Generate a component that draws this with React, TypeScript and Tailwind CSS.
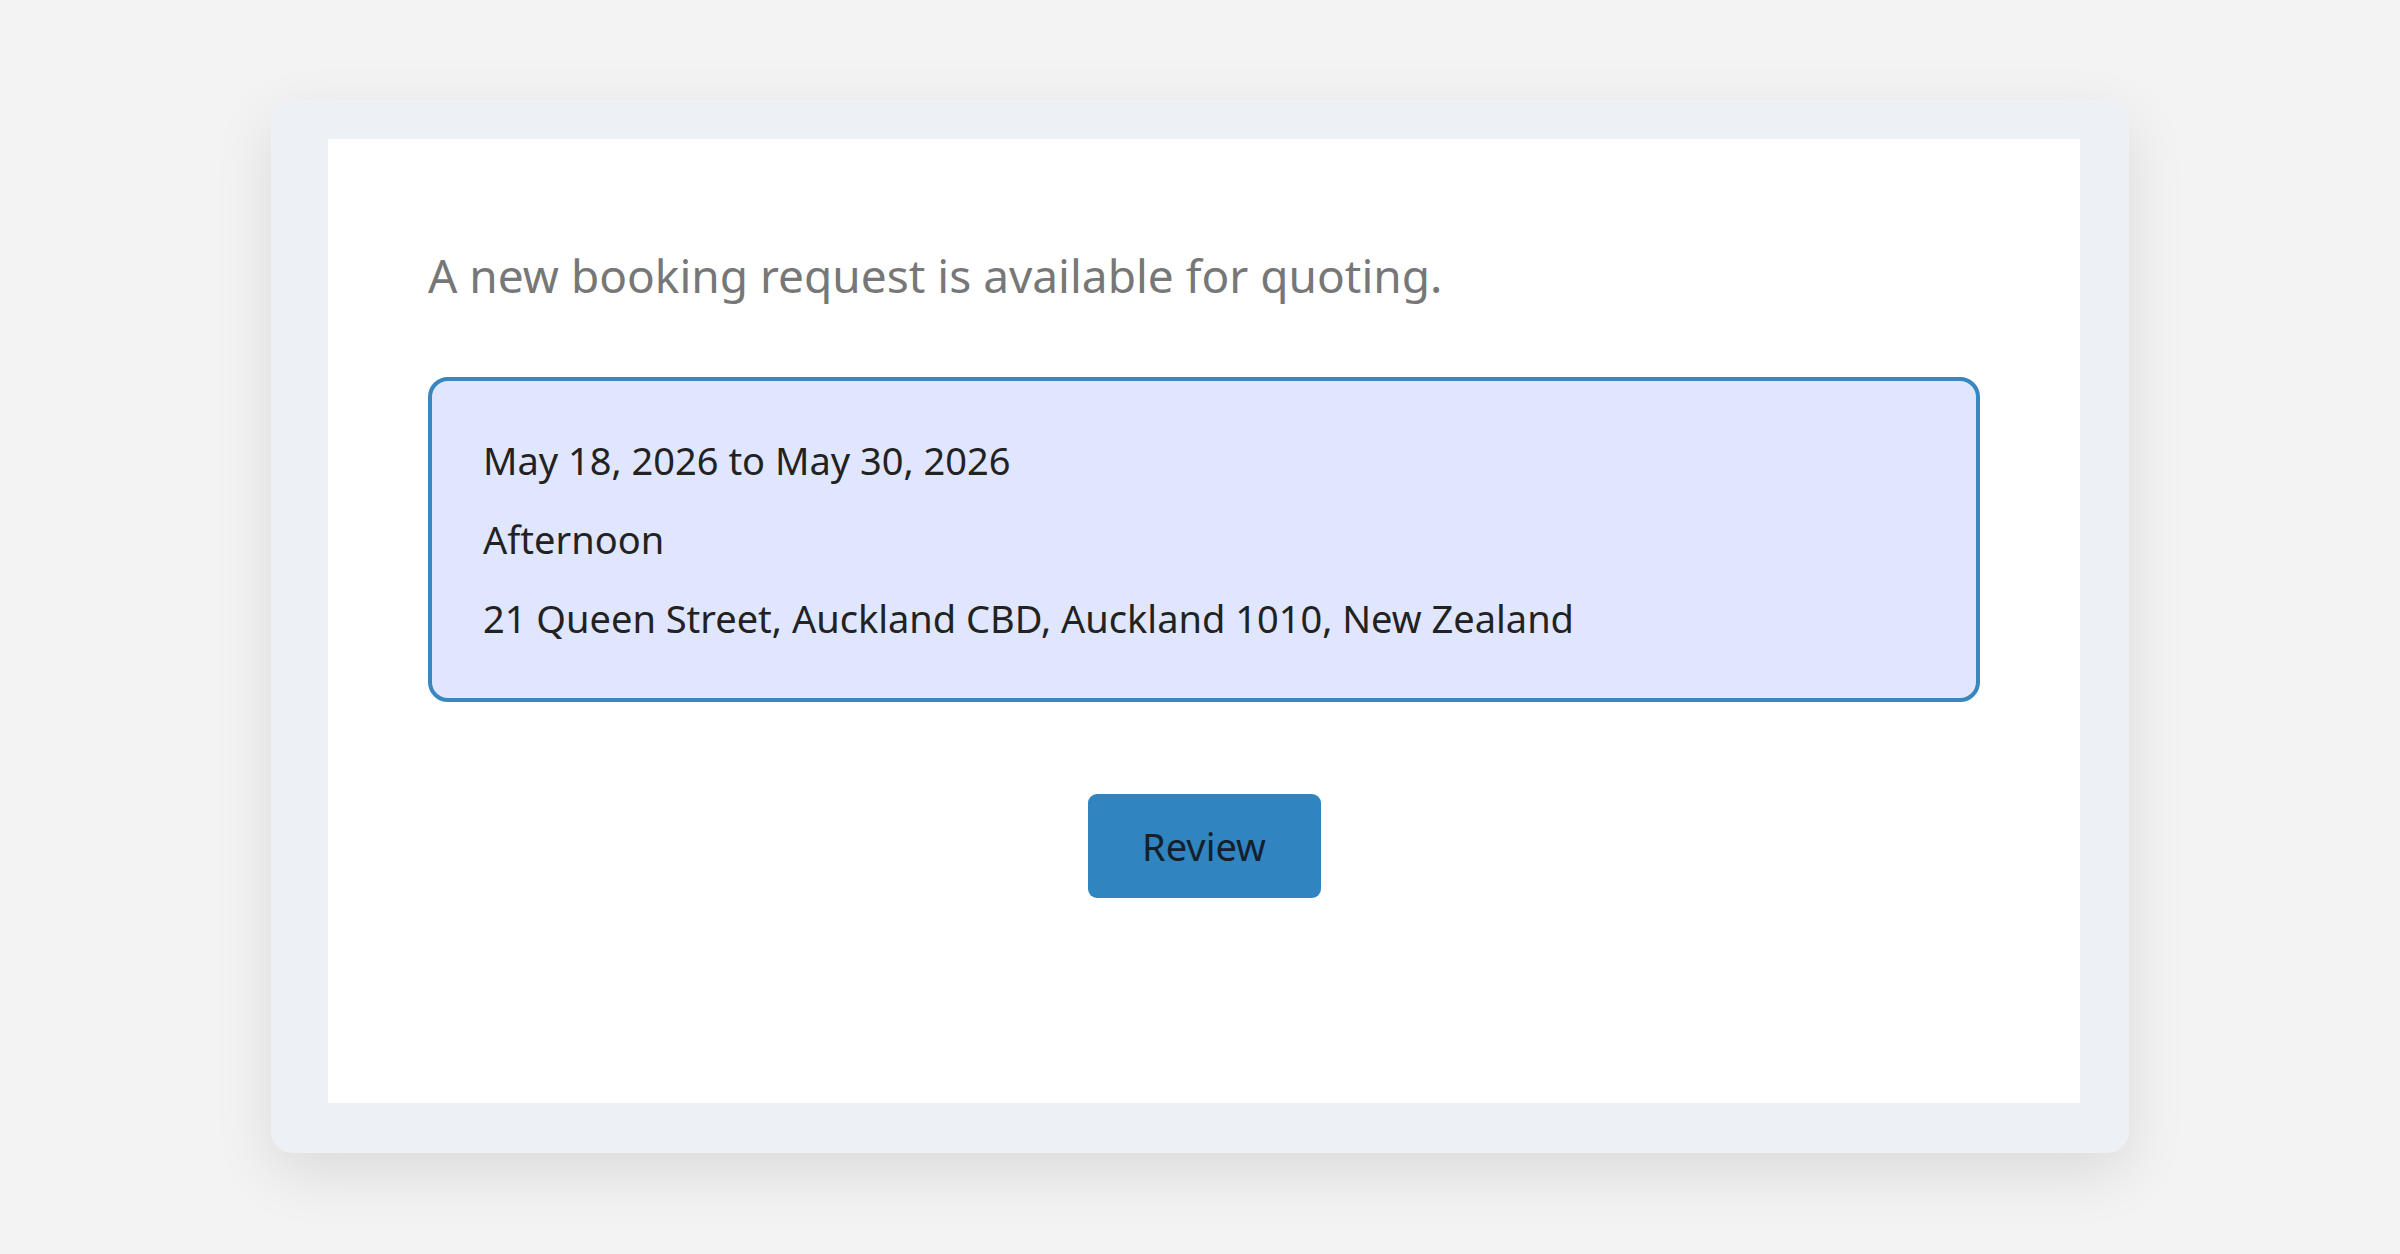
export default function App() {
  return (
    <div className="min-h-[1254px] w-full bg-[#f3f3f3] flex justify-center pt-[100px]" style={{ fontFamily: '"Noto Sans", "Open Sans", sans-serif' }}>
      <div className="w-[1858px] h-[1053px] rounded-[22px] bg-[#edf1f5] pl-[57px] pr-[49px] pt-[39px] pb-[50px] shadow-[0_20px_60px_rgba(0,0,0,0.10)]">
        <div className="h-full bg-white px-[100px] pt-[109px] flex flex-col">
          <p className="text-[46px] leading-[1.2] text-[#777777]">A new booking request is available for quoting.</p>
          <div className="mt-[74px] rounded-[20px] border-[4px] border-[#3a86be] bg-[#e0e6fd] px-[51px] pt-[40px] pb-[40px] text-[#222222] text-[38px] leading-[79px]">
            <p>May 18, 2026 to May 30, 2026</p>
            <p>Afternoon</p>
            <p>21 Queen Street, Auckland CBD, Auckland 1010, New Zealand</p>
          </div>
          <div className="flex justify-center mt-[92px]">
            <button className="w-[233px] h-[104px] rounded-[9px] bg-[#3085c0] text-[38px] text-[#14202c]">Review</button>
          </div>
        </div>
      </div>
    </div>
  );
}
